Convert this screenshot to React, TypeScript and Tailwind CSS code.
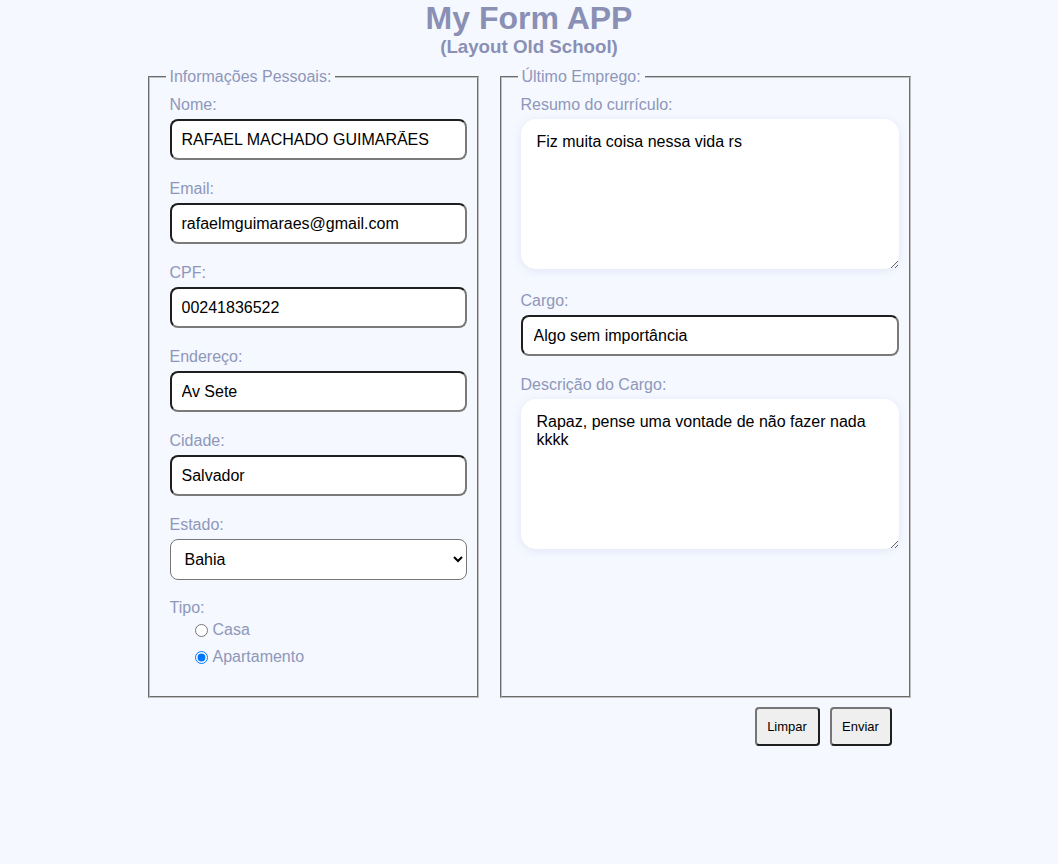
import { useState } from 'react';

const font = { fontFamily: '"Liberation Sans", Arial, sans-serif' };

function Field({ label, value, onChange, pad = 'px-[10px]' }: { label: string; value: string; onChange: (v: string) => void; pad?: string }) {
  return (
    <div className="mb-[20px]">
      <label className="block text-[16px] leading-[18px] text-[#8e97b9]">{label}</label>
      <input
        value={value}
        onChange={(e) => onChange(e.target.value)}
        className={`mt-[5px] block h-[41px] w-full rounded-[8px] border-2 border-t-[#1f1f1f] border-l-[#1f1f1f] border-b-[#7a7a7a] border-r-[#7a7a7a] bg-white text-[16px] text-black outline-none ${pad}`}
      />
    </div>
  );
}

export default function App() {
  const [nome, setNome] = useState('RAFAEL MACHADO GUIMARÃES');
  const [email, setEmail] = useState('rafaelmguimaraes@gmail.com');
  const [cpf, setCpf] = useState('00241836522');
  const [endereco, setEndereco] = useState('Av Sete');
  const [cidade, setCidade] = useState('Salvador');
  const [estado, setEstado] = useState('Bahia');
  const [tipo, setTipo] = useState('apartamento');
  const [resumo, setResumo] = useState('Fiz muita coisa nessa vida rs');
  const [cargo, setCargo] = useState('Algo sem importância');
  const [descricao, setDescricao] = useState('Rapaz, pense uma vontade de não fazer nada kkkk');

  return (
    <div className="min-h-screen w-full bg-[#f5f8ff]" style={font}>
      <header className="text-center text-[#8a90b4]">
        <h1 className="text-[32px] font-bold leading-[36px]">My Form APP</h1>
        <h2 className="text-[18.72px] font-bold leading-[22px]">(Layout Old School)</h2>
      </header>

      <form className="mx-auto mt-[10px] w-[763px]" onSubmit={(e) => e.preventDefault()}>
        <div className="flex gap-[21px]">
          {/* Dados pessoais */}
          <fieldset className="h-[630px] w-[331px] border-2 border-[#c0c0c0] pl-[16px] pr-[10px] [border-style:groove]">
            <legend className="px-[4px] text-[16px] leading-[18px] text-[#8e97b9]">Informações Pessoais:</legend>
            <div className="pl-[4px] pt-[10px]">
              <Field label="Nome:" value={nome} onChange={setNome} />
              <Field label="Email:" value={email} onChange={setEmail} />
              <Field label="CPF:" value={cpf} onChange={setCpf} />
              <Field label="Endereço:" value={endereco} onChange={setEndereco} />
              <Field label="Cidade:" value={cidade} onChange={setCidade} />
              <div className="mb-[19px]">
                <label className="block text-[16px] leading-[18px] text-[#8e97b9]">Estado:</label>
                <select
                  value={estado}
                  onChange={(e) => setEstado(e.target.value)}
                  className="mt-[5px] block h-[41px] w-full rounded-[8px] border border-[#767676] bg-white px-[10px] text-[16px] text-black"
                >
                  <option>Bahia</option>
                  <option>São Paulo</option>
                  <option>Rio de Janeiro</option>
                </select>
              </div>
              <label className="block text-[16px] leading-[18px] text-[#8e97b9]">Tipo:</label>
              <div className="pl-[22px] pt-[4px] text-[16px] text-[#8e97b9]">
                <label className="flex h-[18px] items-center">
                  <input type="radio" name="tipo" checked={tipo === 'casa'} onChange={() => setTipo('casa')} className="m-[3px] mr-[5px] h-[13px] w-[13px]" />
                  Casa
                </label>
                <label className="mt-[9px] flex h-[18px] items-center">
                  <input type="radio" name="tipo" checked={tipo === 'apartamento'} onChange={() => setTipo('apartamento')} className="m-[3px] mr-[5px] h-[13px] w-[13px]" />
                  Apartamento
                </label>
              </div>
            </div>
          </fieldset>

          {/* Último emprego */}
          <fieldset className="h-[630px] w-[411px] border-2 border-[#c0c0c0] pl-[16px] pr-[10px] [border-style:groove]">
            <legend className="px-[4px] text-[16px] leading-[18px] text-[#8e97b9]">Último Emprego:</legend>
            <div className="pl-[3px] pt-[10px]">
              <label className="block text-[16px] leading-[18px] text-[#8e97b9]">Resumo do currículo:</label>
              <textarea
                value={resumo}
                onChange={(e) => setResumo(e.target.value)}
                className="mt-[5px] block h-[150px] w-full rounded-[15px] bg-white px-[16px] py-[14px] text-[16px] leading-[18px] text-black shadow-[0_2px_10px_rgba(90,110,170,0.12)] outline-none"
              />
              <div className="mt-[23px]">
                <Field label="Cargo:" value={cargo} onChange={setCargo} pad="px-[11px]" />
              </div>
              <label className="block text-[16px] leading-[18px] text-[#8e97b9]">Descrição do Cargo:</label>
              <textarea
                value={descricao}
                onChange={(e) => setDescricao(e.target.value)}
                className="mt-[5px] block h-[150px] w-full rounded-[15px] bg-white px-[16px] py-[14px] text-[16px] leading-[18px] text-black shadow-[0_2px_10px_rgba(90,110,170,0.12)] outline-none"
              />
            </div>
          </fieldset>
        </div>

        <div className="mt-[9px] flex justify-end gap-[10px] pr-[19px]">
          <button type="reset" className="h-[39px] w-[65px] rounded-[4px] border-2 border-t-[#767676] border-l-[#767676] border-b-[#1f1f1f] border-r-[#1f1f1f] bg-[#efefef] text-[13px] text-black">
            Limpar
          </button>
          <button type="submit" className="h-[39px] w-[62px] rounded-[4px] border-2 border-t-[#767676] border-l-[#767676] border-b-[#1f1f1f] border-r-[#1f1f1f] bg-[#efefef] text-[13px] text-black">
            Enviar
          </button>
        </div>
      </form>
    </div>
  );
}
